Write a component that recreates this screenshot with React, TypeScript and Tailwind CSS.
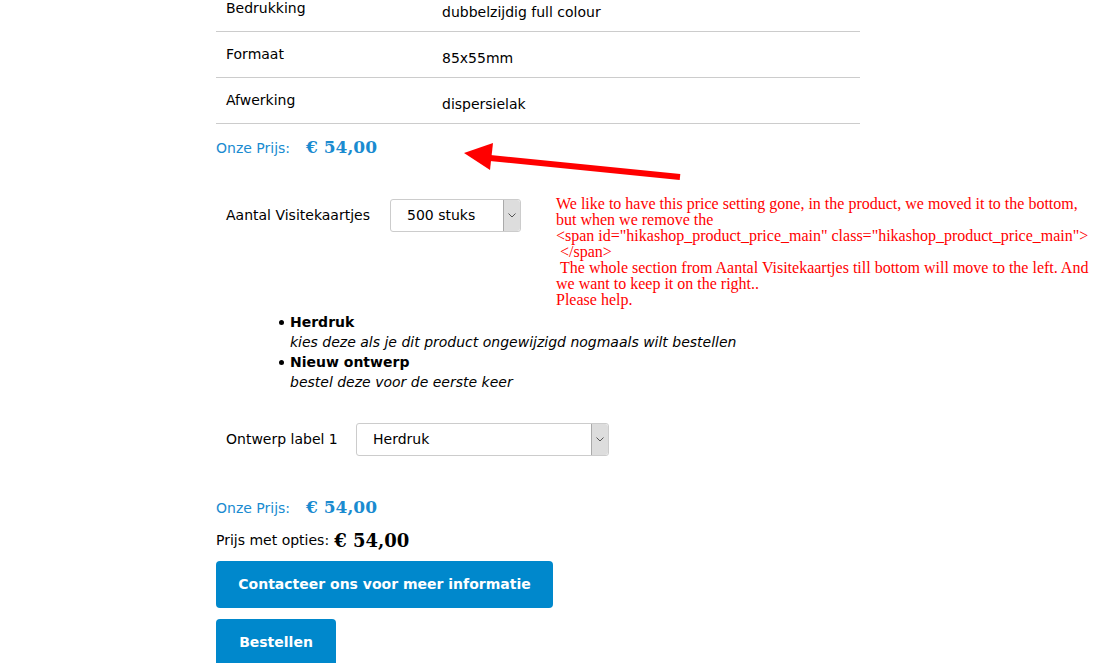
import React from "react";

const sans = { fontFamily: '"DejaVu Sans", Verdana, sans-serif' };

const specs = [
  { label: "Bedrukking", value: "dubbelzijdig full colour" },
  { label: "Formaat", value: "85x55mm" },
  { label: "Afwerking", value: "dispersielak" },
];

const FakeSelect: React.FC<{ value: string; width: string; pad: string }> = ({ value, width, pad }) => (
  <div className={`flex h-[33px] ${width} items-stretch rounded-[3px] border border-[#cccccc] bg-white`}>
    <div className={`flex flex-1 items-center ${pad} text-[14px] text-black`}>{value}</div>
    <div className="flex w-[17px] items-center justify-center border-l border-[#aaaaaa] bg-[#dddddd] rounded-r-[3px]">
      <svg width="8" height="5" viewBox="0 0 8 5">
        <path d="M0.5 0.5 L4 4 L7.5 0.5" fill="none" stroke="#555" strokeWidth="1" />
      </svg>
    </div>
  </div>
);

const Price: React.FC<{ color: string; size: string }> = ({ color, size }) => (
  <span className={`font-bold ${size} ${color}`} style={{ fontFamily: '"DejaVu Serif", Georgia, serif' }}>
    € 54,00
  </span>
);

export default function App() {
  return (
    <div className="relative h-[663px] w-[1117px] overflow-hidden bg-white" style={sans}>
      <div className="ml-[216px] w-[644px] -mt-[14px]">
        {specs.map((s) => (
          <div key={s.label} className="flex h-[46px] border-b border-[#cccccc] text-[14px] text-black">
            <div className="w-[226px] pl-[10px] pt-[12px]">{s.label}</div>
            <div className="pt-[16px]">{s.value}</div>
          </div>
        ))}
      </div>

      <div className="ml-[216px] mt-[13px] flex items-center h-[22px]">
        <span className="text-[14px] text-[#1a8bd0] mr-[16px]">Onze Prijs:</span>
        <Price color="text-[#1a8bd0]" size="text-[17px]" />
      </div>

      <div className="ml-[226px] mt-[40px] flex items-start">
        <div className="flex items-center">
          <span className="text-[14px] text-black w-[164px]">Aantal Visitekaartjes</span>
          <FakeSelect value="500 stuks" width="w-[131px]" pad="pl-[16px]" />
        </div>
        <div
          className="ml-[35px] -mt-[3px] text-[16px] leading-[16px] text-[#ff0000] whitespace-nowrap"
          style={{ fontFamily: '"Liberation Serif", "Times New Roman", serif' }}
        >
          We like to have this price setting gone, in the product, we moved it to the bottom,
          <br />
          but when we remove the
          <br />
          {'<span id="hikashop_product_price_main" class="hikashop_product_price_main">'}
          <br />
          &nbsp;{"</span>"}
          <br />
          &nbsp;The whole section from Aantal Visitekaartjes till bottom will move to the left. And
          <br />
          we want to keep it on the right..
          <br />
          Please help.
        </div>
      </div>

      <ul className="ml-[290px] mt-[4px] text-[14px] leading-[20px] text-black">
        {[
          { title: "Herdruk", desc: "kies deze als je dit product ongewijzigd nogmaals wilt bestellen" },
          { title: "Nieuw ontwerp", desc: "bestel deze voor de eerste keer" },
        ].map((item) => (
          <li key={item.title} className="relative">
            <span className="absolute -left-[11px] top-[8px] h-[5px] w-[5px] rounded-full bg-black" />
            <span className="font-bold">{item.title}</span>
            <br />
            <span className="italic">{item.desc}</span>
          </li>
        ))}
      </ul>

      <div className="ml-[226px] mt-[31px] flex items-center">
        <span className="text-[14px] text-black w-[130px]">Ontwerp label 1</span>
        <FakeSelect value="Herdruk" width="w-[253px]" pad="pl-[16px]" />
      </div>

      <div className="ml-[216px] mt-[41px] flex items-center h-[22px]">
        <span className="text-[14px] text-[#1a8bd0] mr-[16px]">Onze Prijs:</span>
        <Price color="text-[#1a8bd0]" size="text-[17px]" />
      </div>

      <div className="ml-[216px] mt-[10px] flex items-center h-[22px]">
        <span className="text-[14px] text-black mr-[5px]">Prijs met opties:</span>
        <Price color="text-black" size="text-[18px]" />
      </div>

      <div className="ml-[216px] mt-[10px] flex flex-col items-start gap-[11px]">
        <button className="h-[47px] w-[337px] rounded-[4px] bg-[#0088cc] text-[14px] font-bold text-white">
          Contacteer ons voor meer informatie
        </button>
        <button className="h-[47px] w-[120px] rounded-[4px] bg-[#0088cc] text-[14px] font-bold text-white">
          Bestellen
        </button>
      </div>

      <svg className="absolute left-0 top-0 pointer-events-none" width="1117" height="663">
        <line x1="490" y1="158" x2="680" y2="177" stroke="#ff0000" strokeWidth="6" />
        <polygon points="464,153 493,143 490,170" fill="#ff0000" />
      </svg>
    </div>
  );
}
